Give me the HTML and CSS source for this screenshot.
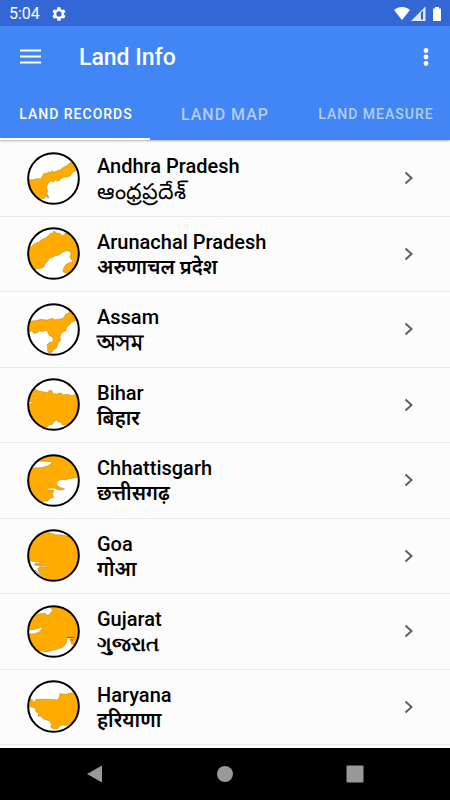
FILE: index.html
```html
<!DOCTYPE html>
<html lang="en">
<head>
    <meta charset="UTF-8">
    <meta name="viewport" content="width=device-width, initial-scale=1.0">
    <title>Land Info</title>
    <link rel="stylesheet" href="styles.css">
</head>
<body>
    <div class="status-bar">
        <span class="clock">5:04</span>
        <svg class="gear" viewBox="0 0 24 24" width="16" height="16"><path fill="#fff" d="M19.4 13c0-.3.1-.6.1-1s0-.7-.1-1l2.1-1.6c.2-.2.3-.4.1-.7l-2-3.4c-.1-.2-.4-.3-.6-.2l-2.500 1c-.5-.4-1.100-.7-1.700-1L14.400 2.400c0-.2-.2-.4-.5-.4h-4c-.200 0-.4.2-.5.4L9.100 5.100c-.6.3-1.200.6-1.700 1l-2.500-1c-.2-.1-.5 0-.6.2l-2 3.400c-.1.3 0 .5.1.7L4.500 11c0 .3-.1.6-.1 1s0 .7.1 1l-2.100 1.600c-.2.2-.3.4-.1.7l2 3.400c.1.2.4.3.6.2l2.500-1c.5.4 1.100.7 1.700 1l.4 2.700c0 .2.2.4.5.4h4c.2 0 .4-.2.5-.4l.4-2.700c.6-.3 1.200-.6 1.700-1l2.500 1c.2.1.5 0 .6-.2l2-3.400c.1-.3 0-.5-.1-.7L19.400 13zM12 8a4 4 0 1 1 0 8 4 4 0 0 1 0-8z"/></svg>
        <svg class="signals" viewBox="0 0 48 16" width="48" height="16">
            <path fill="#fff" d="M0 4C4.500 0 11.500 0 16 4L8 14z"/>
            <path fill="#fff" opacity=".85" d="M17 15L31.500 0.500V15z"/>
            <path fill="#2f62d0" d="M27 6.500l2-2V13.500h-2z"/>
            <path fill="#fff" d="M41 1h4v1.500h2v12.500h-8V2.500h2z"/>
        </svg>
    </div>

    <header>
        <div class="toolbar">
            <button class="icon-btn" aria-label="Menu">
                <svg viewBox="0 0 22 16" width="22" height="16"><path stroke="#fff" stroke-width="2.200" d="M0 1.500h21M0 7.500h21M0 13.500h21"/></svg>
            </button>
            <h1>Land Info</h1>
            <button class="icon-btn more" aria-label="More options">
                <svg viewBox="0 0 6 20" width="6" height="20" fill="#fff"><circle cx="3" cy="3.500" r="2.400"/><circle cx="3" cy="10" r="2.400"/><circle cx="3" cy="16.500" r="2.400"/></svg>
            </button>
        </div>
        <nav class="tabs">
            <a href="#records" class="active">LAND RECORDS</a>
            <a href="#map" class="wide">LAND MAP</a>
            <a href="#measure">LAND MEASURE</a>
        </nav>
    </header>

    <!-- Shared shapes -->
    <svg class="defs" width="0" height="0" aria-hidden="true">
        <clipPath id="disc"><circle cx="79.500" cy="79.500" r="76"/></clipPath>
        <symbol id="ring" viewBox="0 0 159 159"><circle cx="79.500" cy="79.500" r="76" fill="none" stroke="#000" stroke-width="6"/></symbol>
        <symbol id="chevron" viewBox="0 0 10 14"><path d="M1.500 1.500L7.500 7l-6 5.500" fill="none" stroke="#5f5f5f" stroke-width="2"/></symbol>
    </svg>

    <ul class="states" id="records">
        <li><a href="#andhra-pradesh">
            <svg class="map" viewBox="0 0 159 159"><circle class="land-bg" cx="79.500" cy="79.500" r="76"/><path class="land" clip-path="url(#disc)" d="M0 83L20 83 28 80 40 80 45 75 50 65 60 63 67 59 71 62 75 55 79 61 91 56 100 53 107 47 121 40 127 34 139 29 159 22 159 50 137 61 131 71 119 76 111 75 101 80 96 87 91 88 85 84 80 90 71 87 62 96 59 105 62 118 60 124 66 138 61 138 58 129 54 138 43 141 30 159 0 159z"/><use href="#ring"/></svg>
            <span class="name">Andhra Pradesh<span lang="te">ఆంధ్రప్రదేశ్</span></span>
            <svg class="chevron"><use href="#chevron"/></svg>
        </a></li>
        <li><a href="#arunachal-pradesh">
            <svg class="map" viewBox="0 0 159 159"><circle class="land-bg" cx="79.500" cy="79.500" r="76"/><path class="land" clip-path="url(#disc)" d="M0 68L12 60 22 50 35 45 43 38 54 34 66 25 71 17 75 21 81 11 88 18 98 19 107 26 119 15 140 18 159 60 159 130 140 150 119 140 108 134 110 123 118 111 130 106 136 107 137 101 129 93 132 75 120 71 106 76 98 83 82 88 68 94 60 105 54 111 51 119 40 125 30 125 20 130 0 140z"/><use href="#ring"/></svg>
            <span class="name">Arunachal Pradesh<span lang="hi">अरुणाचल प्रदेश</span></span>
            <svg class="chevron"><use href="#chevron"/></svg>
        </a></li>
        <li><a href="#assam">
            <svg class="map" viewBox="0 0 159 159"><circle class="land-bg" cx="79.500" cy="79.500" r="76"/><path class="land" clip-path="url(#disc)" d="M0 55L24 53 42 49 60 51 77 46 83 50 101 48 110 44 116 34 124 31 129 22 145 20 159 40 145 54 134 57 127 66 119 72 117 84 109 86 101 94 99 103 101 112 93 120 91 128 88 136 78 141 75 148 66 150 62 145 61 124 69 117 75 119 79 111 76 101 67 98 62 88 57 82 46 86 37 83 30 90 20 91 14 84 0 88z"/><use href="#ring"/></svg>
            <span class="name">Assam<span lang="as">অসম</span></span>
            <svg class="chevron"><use href="#chevron"/></svg>
        </a></li>
        <li><a href="#bihar">
            <svg class="map" viewBox="0 0 159 159"><circle class="land-bg" cx="79.500" cy="79.500" r="76"/><path class="land" clip-path="url(#disc)" d="M0 20L25 33 35 39 52 42 61 44 68 36 75 39 77 47 90 48 100 44 109 50 124 49 135 53 146 49 159 44 159 150 124 149 115 140 105 141 104 134 95 132 89 127 80 131 77 139 67 140 62 146 52 147 30 159 0 159 0 80 16 76 16 72 0 70z"/><use href="#ring"/></svg>
            <span class="name">Bihar<span lang="hi">बिहार</span></span>
            <svg class="chevron"><use href="#chevron"/></svg>
        </a></li>
        <li><a href="#chhattisgarh">
            <svg class="map" viewBox="0 0 159 159"><circle class="land-bg" cx="79.500" cy="79.500" r="76"/><path class="land" clip-path="url(#disc)" d="M0 43L18 41 40 41 61 36 76 27 70 23 45 22 30 20 48 16 40 11 50 0 159 0 159 68 137 73 127 74 116 78 103 76 91 82 88 92 97 99 113 105 100 109 82 103 60 103 66 108 80 108 77 121 80 130 70 133 62 141 44 143 30 159 0 159z"/><use href="#ring"/></svg>
            <span class="name">Chhattisgarh<span lang="hi">छत्तीसगढ़</span></span>
            <svg class="chevron"><use href="#chevron"/></svg>
        </a></li>
        <li><a href="#goa">
            <svg class="map" viewBox="0 0 159 159"><circle class="land-bg" cx="79.500" cy="79.500" r="76"/><path class="land" clip-path="url(#disc)" d="M0 0L55 5 68 12 88 17 105 18 120 21 159 20 159 159 60 155 48 141 38 132 32 119 38 115 60 114 58 111 42 112 22 108 25 103 40 101 37 98 20 98 0 92z"/><path class="coast" d="M24 123l25 23"/><use href="#ring"/></svg>
            <span class="name">Goa<span lang="hi">गोआ</span></span>
            <svg class="chevron"><use href="#chevron"/></svg>
        </a></li>
        <li><a href="#gujarat">
            <svg class="map" viewBox="0 0 159 159"><circle class="land-bg" cx="79.500" cy="79.500" r="76"/><path class="land" clip-path="url(#disc)" d="M0 45L15 31 35 27 54 24 58 31 69 28 72 21 78 18 72 10 80 0 159 0 159 110 141 119 134 118 128 98 120 98 119 113 108 127 92 132 78 136 60 141 38 138 20 135 0 110 0 87 22 86 38 80 45 70 47 65 30 71 20 74 0 74z"/><path class="coast" d="M119 97h23M131 105h8"/><use href="#ring"/></svg>
            <span class="name">Gujarat<span lang="gu">ગુજરાત</span></span>
            <svg class="chevron"><use href="#chevron"/></svg>
        </a></li>
        <li><a href="#haryana">
            <svg class="map" viewBox="0 0 159 159"><circle class="land-bg" cx="79.500" cy="79.500" r="76"/><path class="land" clip-path="url(#disc)" d="M0 50L12 58 18 60 14 66 22 65 27 58 50 58 70 58 92 60 98 49 98 41 118 43 125 40 134 39 145 34 159 40 159 120 145 122 127 132 119 137 108 135 97 139 93 146 76 146 71 141 74 133 66 122 49 117 41 109 33 109 34 101 26 94 27 88 18 82 0 80z"/><use href="#ring"/></svg>
            <span class="name">Haryana<span lang="hi">हरियाणा</span></span>
            <svg class="chevron"><use href="#chevron"/></svg>
        </a></li>
    </ul>

    <footer class="nav-bar">
        <button aria-label="Back"><svg viewBox="0 0 18 18" width="18" height="18"><path d="M1 9L16 0.500v17z"/></svg></button>
        <button aria-label="Home"><svg viewBox="0 0 18 18" width="18" height="18"><circle cx="9" cy="9" r="8"/></svg></button>
        <button aria-label="Recent apps"><svg viewBox="0 0 18 18" width="18" height="18"><rect x="0.500" y="0.500" width="17" height="17" rx="1"/></svg></button>
    </footer>
</body>
</html>
```

FILE: styles.css
```css
* {
    box-sizing: border-box;
}
body {
    margin: 0;
    min-height: 100vh;
    display: flex;
    flex-direction: column;
    font-family: Roboto, "Noto Sans", sans-serif;
    background: #fcfcfc;
    color: #000;
}
a {
    text-decoration: none;
    color: inherit;
}
button {
    background: none;
    border: none;
    padding: 0;
    cursor: pointer;
}
svg {
    display: block;
}
.defs {
    position: absolute;
}
.status-bar {
    height: 26px;
    padding: 1px 8px 0 9px;
    display: flex;
    align-items: center;
    background: #3367d6;
    color: #fff;
}
.clock {
    font-size: 16px;
    line-height: 24px;
}
.gear {
    margin-left: 11px;
}
.signals {
    margin-left: auto;
}
header {
    background: #4285f4;
    color: #fff;
    box-shadow: 0 1px 2px rgba(0, 0, 0, 0.3);
}
.toolbar {
    height: 62px;
    padding: 0 21px 0 20px;
    display: flex;
    align-items: center;
}
.toolbar h1 {
    margin: 0 0 0 37px;
    padding-top: 2px;
    font-size: 23px;
    line-height: 28px;
    font-weight: 500;
}
.more {
    margin-left: auto;
}
.tabs {
    display: grid;
    grid-template-columns: repeat(3, 1fr);
}
.tabs a {
    height: 52px;
    padding: 2px 0 0 2px;
    display: flex;
    align-items: center;
    justify-content: center;
    border-bottom: 2px solid transparent;
    font-size: 14px;
    font-weight: 500;
    letter-spacing: 1px;
    white-space: nowrap;
    color: rgba(255, 255, 255, 0.6);
}
.tabs .wide {
    padding-left: 0;
    font-size: 16px;
}
.tabs .active {
    color: #fff;
    border-color: #fff;
}
.states {
    flex: 1;
    margin: 0;
    padding: 1px 0 3px;
    list-style: none;
    display: grid;
    grid-auto-rows: 1fr;
}
.states li {
    border-bottom: 1px solid #e9e9e9;
}
.states a {
    height: 100%;
    padding: 0 36px 0 27px;
    display: flex;
    align-items: center;
}
.map {
    width: 53px;
    height: 53px;
}
.land-bg {
    fill: #fff;
}
.land {
    fill: #ffab00;
    stroke: #8a6a20;
    stroke-width: 1;
}
.coast {
    fill: none;
    stroke: #5f4a10;
    stroke-width: 2;
}
.name {
    margin-left: 17px;
    padding-top: 2px;
    font-size: 20px;
    line-height: 25px;
    font-weight: 500;
}
.name span {
    display: block;
    height: 25px;
    font-weight: 600;
}
.name span:lang(te) {
    font-size: 22px;
    font-weight: 500;
}
.name span:lang(as) {
    font-size: 22px;
}
.chevron {
    margin-left: auto;
    width: 10px;
    height: 14px;
}
.nav-bar {
    height: 52px;
    padding: 0 30px;
    display: grid;
    grid-template-columns: repeat(3, 1fr);
    background: #000;
}
.nav-bar button {
    display: flex;
    align-items: center;
    justify-content: center;
}
.nav-bar svg {
    fill: #999;
}
```
